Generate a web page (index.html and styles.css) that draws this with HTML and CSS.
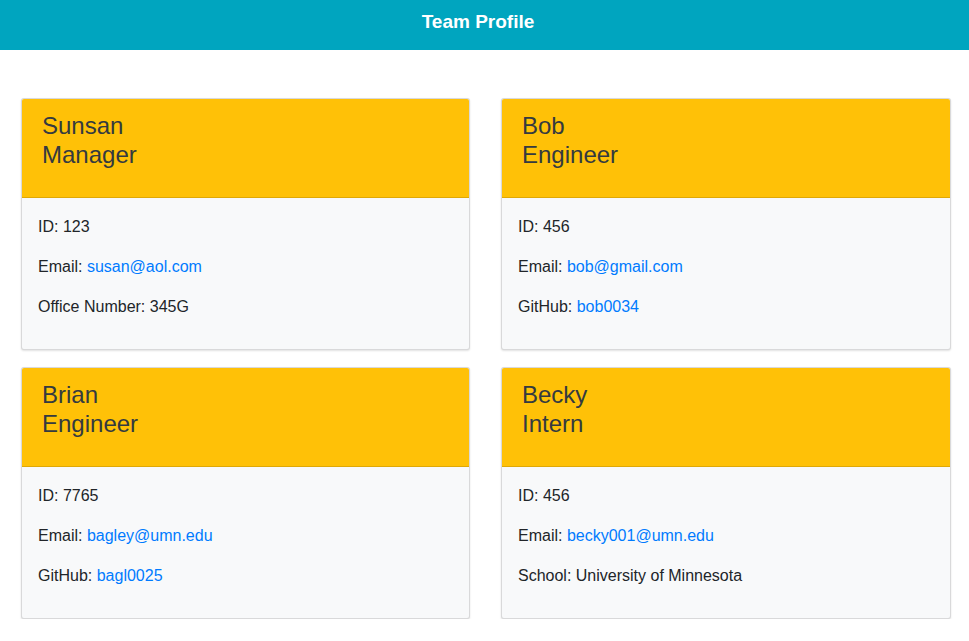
FILE: index.html
```html
<!DOCTYPE html>
<html lang="en">
<head>
<meta charset="utf-8">
<title>Team Profile</title>
<link rel="stylesheet" href="styles.css">
</head>
<body>
<header class="topbar"><h1 class="title">Team Profile</h1></header>
<main class="team">
  <section class="card">
    <div class="card-header"><h2 class="name">Sunsan</h2><h2 class="role">Manager</h2></div>
    <div class="card-body">
      <p>ID: 123</p>
      <p>Email: <a href="mailto:susan@aol.com">susan@aol.com</a></p>
      <p>Office Number: 345G</p>
    </div>
  </section>
  <section class="card">
    <div class="card-header"><h2 class="name">Bob</h2><h2 class="role">Engineer</h2></div>
    <div class="card-body">
      <p>ID: 456</p>
      <p>Email: <a href="mailto:bob@gmail.com">bob@gmail.com</a></p>
      <p>GitHub: <a href="#">bob0034</a></p>
    </div>
  </section>
  <section class="card">
    <div class="card-header"><h2 class="name">Brian</h2><h2 class="role">Engineer</h2></div>
    <div class="card-body">
      <p>ID: 7765</p>
      <p>Email: <a href="mailto:bagley@umn.edu">bagley@umn.edu</a></p>
      <p>GitHub: <a href="#">bagl0025</a></p>
    </div>
  </section>
  <section class="card">
    <div class="card-header"><h2 class="name">Becky</h2><h2 class="role">Intern</h2></div>
    <div class="card-body">
      <p>ID: 456</p>
      <p>Email: <a href="mailto:becky001@umn.edu">becky001@umn.edu</a></p>
      <p>School: University of Minnesota</p>
    </div>
  </section>
</main>
</body>
</html>
```
FILE: styles.css
```css
* { box-sizing: border-box; }
html, body { margin: 0; padding: 0; background: #fff; }
body {
  font-family: "Liberation Sans", Arial, Helvetica, sans-serif;
  font-size: 16px;
  line-height: 24px;
  color: #212529;
}
.topbar {
  background: #00a5bf;
  height: 50px;
  padding: 10px 13px 0 0;
}
.title {
  margin: 0;
  text-align: center;
  color: #fff;
  font-size: 19px;
  line-height: 24px;
  font-weight: bold;
}
.team {
  display: grid;
  grid-template-columns: 449px 450px;
  column-gap: 31px;
  row-gap: 17px;
  padding: 48px 0 0 21px;
}
.card {
  border: 1px solid rgba(0,0,0,.125);
  border-radius: 3px;
  overflow: hidden;
  background: #f8f9fa;
  box-shadow: 0 1px 2px rgba(0,0,0,.12);
}
.card-header {
  background: #ffc107;
  border-bottom: 1px solid rgba(0,0,0,.125);
  padding: 12px 20px 28px;
}
.name, .role {
  margin: 0;
  font-size: 24px;
  line-height: 29px;
  font-weight: normal;
  color: #343a40;
}
.card-body {
  padding: 17px 16px 0;
}
.card-body p {
  margin: 0 0 16px;
}
.card-body p:last-child { margin-bottom: 30px; }
a { color: #007bff; text-decoration: none; }
```
